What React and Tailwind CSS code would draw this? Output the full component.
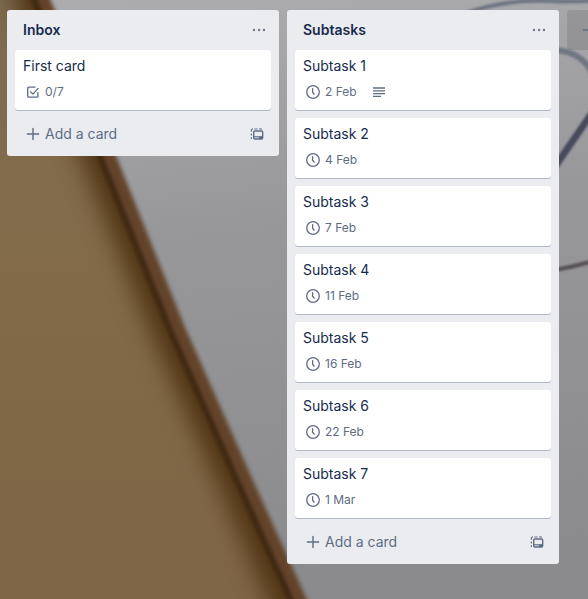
import { useId } from "react";

const LISTS = [
  {
    title: "Inbox",
    cards: [{ title: "First card", checklist: "0/7" }],
  },
  {
    title: "Subtasks",
    cards: [
      { title: "Subtask 1", due: "2 Feb", description: true },
      { title: "Subtask 2", due: "4 Feb" },
      { title: "Subtask 3", due: "7 Feb" },
      { title: "Subtask 4", due: "11 Feb" },
      { title: "Subtask 5", due: "16 Feb" },
      { title: "Subtask 6", due: "22 Feb" },
      { title: "Subtask 7", due: "1 Mar" },
    ],
  },
];

function ClockIcon() {
  return (
    <svg className="size-4" viewBox="0 0 16 16" fill="none" stroke="currentColor" strokeWidth="1.3" strokeLinecap="round" aria-hidden="true">
      <circle cx="8" cy="8" r="6.3" />
      <path d="M7.6 4.6v3.6l1.5 2" />
    </svg>
  );
}

function ChecklistIcon() {
  return (
    <svg className="size-4" viewBox="0 0 16 16" fill="none" stroke="currentColor" strokeWidth="1.3" aria-hidden="true">
      <path d="M10.5 3.2H3.7a1 1 0 0 0-1 1v8a1 1 0 0 0 1 1h8.2a1 1 0 0 0 1-1V8.2" />
      <path d="M5.2 7.4l2.7 2.7 5.5-6" />
    </svg>
  );
}

function DescriptionIcon() {
  return (
    <svg className="size-4" viewBox="0 0 16 16" fill="none" stroke="currentColor" strokeWidth="1.3" aria-hidden="true">
      <path d="M2 4h12M2 6.8h12M2 9.6h12M2 12.4h8" />
    </svg>
  );
}

function PlusIcon() {
  return (
    <svg className="size-4" viewBox="0 0 16 16" fill="none" stroke="currentColor" strokeWidth="1.4" strokeLinecap="round" aria-hidden="true">
      <path d="M8 2.4v11.2M2.4 8h11.2" />
    </svg>
  );
}

function MoreIcon() {
  return (
    <svg className="size-4" viewBox="0 0 16 16" fill="currentColor" aria-hidden="true">
      <circle cx="3" cy="8" r="1.2" />
      <circle cx="8" cy="8" r="1.2" />
      <circle cx="13" cy="8" r="1.2" />
    </svg>
  );
}

function TemplateIcon() {
  return (
    <svg className="size-4" viewBox="0 0 16 16" fill="none" stroke="currentColor" strokeWidth="1.4" aria-hidden="true">
      <rect x="4.7" y="5" width="9" height="8" rx="1.2" />
      <path d="M4.7 10.8h9" strokeWidth="1.1" />
      <path d="M9.8 10.6h3.8V13H9.8z" fill="currentColor" stroke="none" />
      <path d="M2.4 13v-1.8M2.4 9.6V7.4M2.4 5.8V3.9q0-.9.9-.9H4M5.4 3h3M10 3h3" strokeWidth="1.2" />
    </svg>
  );
}

function Card({ card }) {
  return (
    <li>
      <a
        href="#"
        className="block rounded-[3px] bg-white px-2 pt-1.5 pb-2 shadow-[0_1px_0_rgba(9,30,66,0.25)] hover:bg-[#f4f5f7]"
      >
        <span className="block text-sm leading-5 text-[#172b4d]">{card.title}</span>
        <span className="mt-2 mb-0.5 flex h-4 items-center gap-3.5 pl-0.5 text-xs text-[#5e6c84]">
          {card.checklist && (
            <span className="flex items-center gap-1">
              <ChecklistIcon />
              {card.checklist}
            </span>
          )}
          {card.due && (
            <span className="flex items-center gap-1">
              <ClockIcon />
              {card.due}
            </span>
          )}
          {card.description && <DescriptionIcon />}
        </span>
      </a>
    </li>
  );
}

function List({ list }) {
  return (
    <section className="w-68 shrink-0 rounded-[3px] bg-[#ebecf0] px-2 pb-2">
      <header className="flex h-10 items-center justify-between pl-2">
        <h2 className="text-sm font-semibold text-[#172b4d]">{list.title}</h2>
        <button type="button" aria-label="List actions" className="px-1 py-2 text-[#6b778c]">
          <MoreIcon />
        </button>
      </header>
      <ul className="flex flex-col gap-2">
        {list.cards.map((card) => (
          <Card key={card.title} card={card} />
        ))}
      </ul>
      <footer className="mt-2.5 flex h-7 items-center justify-between text-[#5e6c84]">
        <button type="button" className="flex items-center gap-1 pl-2.5 text-sm">
          <PlusIcon />
          Add a card
        </button>
        <button type="button" aria-label="Create from template" className="px-1.5">
          <TemplateIcon />
        </button>
      </footer>
    </section>
  );
}

// Notebook on a pale desk, with a few loose pen strokes at the right
function Wallpaper() {
  const id = useId();
  return (
    <svg
      className="absolute inset-0 -z-10 size-full"
      viewBox="0 0 588 599"
      preserveAspectRatio="xMidYMid slice"
      aria-hidden="true"
    >
      <defs>
        <linearGradient id={`${id}desk`} x1="0" y1="0" x2="0.1" y2="1">
          <stop offset="0" stopColor="#adadb0" />
          <stop offset="0.4" stopColor="#98989b" />
          <stop offset="1" stopColor="#8b8b8d" />
        </linearGradient>
        <linearGradient id={`${id}cover`} x1="0" y1="0" x2="0" y2="1">
          <stop offset="0" stopColor="#7d6b50" />
          <stop offset="0.4" stopColor="#826b49" />
          <stop offset="1" stopColor="#7e6545" />
        </linearGradient>
        <filter id={`${id}soft`} x="-20%" y="-20%" width="140%" height="140%" colorInterpolationFilters="sRGB">
          <feGaussianBlur stdDeviation="2" />
        </filter>
        <filter id={`${id}shade`} x="-50%" y="-20%" width="200%" height="140%" colorInterpolationFilters="sRGB">
          <feGaussianBlur stdDeviation="12" />
        </filter>
        <filter id={`${id}pen`} x="-20%" y="-20%" width="140%" height="140%" colorInterpolationFilters="sRGB">
          <feGaussianBlur stdDeviation="0.8" />
        </filter>
        <clipPath id={`${id}clip`}>
          <path d="M-20 -20H32L106 156L176 330L244 483L310 630H-20Z" />
        </clipPath>
      </defs>
      <rect width="588" height="599" fill={`url(#${id}desk)`} />
      <path d="M-20 -20H32L106 156L176 330L244 483L310 630H-20Z" fill={`url(#${id}cover)`} />
      <g clipPath={`url(#${id}clip)`}>
        <path d="M24 -20L98 156L168 330L236 483L304 640" fill="none" stroke="#4c300f" strokeWidth="30" filter={`url(#${id}shade)`} />
      </g>
      <g fill="none" filter={`url(#${id}soft)`}>
        <path d="M34 -20L108 156L178 330L246 483L317 640" stroke="#63442b" strokeWidth="15" />
        <path d="M26 -20L100 156L170 330L238 483L309 640" stroke="#38240d" strokeWidth="5" />
      </g>
      <g fill="none" filter={`url(#${id}pen)`}>
        <path d="M466 13Q505 -1 550 1T600 -2" stroke="#6c7480" strokeWidth="4" />
        <path d="M548 50C568 49 580 56 588 66C603 88 598 108 586 122" stroke="#6f7682" strokeWidth="6" />
        <path d="M592 113L552 171" stroke="#474a5a" strokeWidth="7" />
        <path d="M550 271Q572 267 594 261" stroke="#554f54" strokeWidth="4" />
      </g>
    </svg>
  );
}

export default function App() {
  return (
    <main className="relative isolate flex min-h-screen items-start gap-2 overflow-hidden px-[7px] py-2.5 font-['Inter','Liberation_Sans',sans-serif]">
      <Wallpaper />
      {LISTS.map((list) => (
        <List key={list.title} list={list} />
      ))}
      <button
        type="button"
        aria-label="Add another list"
        className="flex h-10 w-68 shrink-0 items-center rounded-[3px] bg-black/10 px-3.5 text-[#5e6c84]"
      >
        <PlusIcon />
      </button>
    </main>
  );
}
